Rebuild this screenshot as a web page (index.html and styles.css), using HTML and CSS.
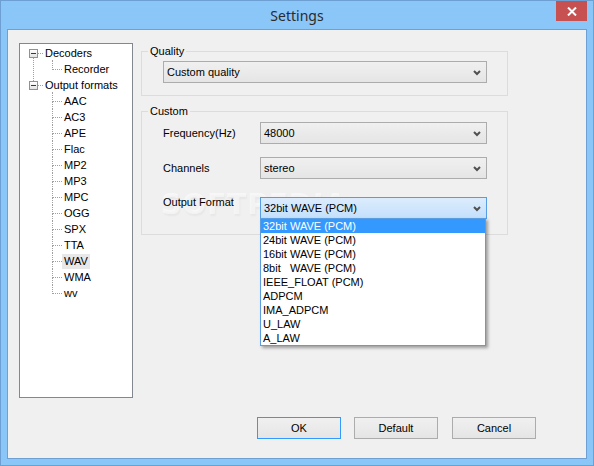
FILE: index.html
```html
<!DOCTYPE html>
<html lang="en">
<head>
    <meta charset="UTF-8">
    <meta name="viewport" content="width=device-width, initial-scale=1.0">
    <title>Settings</title>
    <link rel="stylesheet" href="styles.css">
</head>
<body>
    <div class="window">
        <div class="titlebar">
            <span class="title">Settings</span>
            <div class="close-btn">
                <svg width="10" height="9" viewBox="0 0 10 9">
                    <path d="M1 0.5 L9 8.5 M9 0.5 L1 8.5" stroke="#fff" stroke-width="2" fill="none"/>
                </svg>
            </div>
        </div>

        <div class="client">
            <div class="main">
                <ul class="tree">
                    <li class="node">
                        <div class="row"><span class="toggle"></span><span class="label">Decoders</span></div>
                        <ul class="sub">
                            <li><span class="label">Recorder</span></li>
                        </ul>
                    </li>
                    <li class="node">
                        <div class="row"><span class="toggle"></span><span class="label">Output formats</span></div>
                        <ul class="sub">
                            <li><span class="label">AAC</span></li>
                            <li><span class="label">AC3</span></li>
                            <li><span class="label">APE</span></li>
                            <li><span class="label">Flac</span></li>
                            <li><span class="label">MP2</span></li>
                            <li><span class="label">MP3</span></li>
                            <li><span class="label">MPC</span></li>
                            <li><span class="label">OGG</span></li>
                            <li><span class="label">SPX</span></li>
                            <li><span class="label">TTA</span></li>
                            <li><span class="label selected">WAV</span></li>
                            <li><span class="label">WMA</span></li>
                            <li><span class="label">wv</span></li>
                        </ul>
                    </li>
                </ul>

                <div class="panel">
                    <div class="group quality">
                        <span class="group-title">Quality</span>
                        <div class="combo wide">
                            <span>Custom quality</span>
                            <svg class="arrow" width="8" height="6" viewBox="0 0 8 6"><path d="M1 1 L4 4 L7 1" stroke="#505050" stroke-width="2" fill="none"/></svg>
                        </div>
                    </div>

                    <div class="group custom">
                        <span class="group-title">Custom</span>
                        <span class="watermark">SOFTPEDIA<sup>&reg;</sup></span>
                        <div class="field">
                            <span class="field-label">Frequency(Hz)</span>
                            <div class="combo">
                                <span>48000</span>
                                <svg class="arrow" width="8" height="6" viewBox="0 0 8 6"><path d="M1 1 L4 4 L7 1" stroke="#505050" stroke-width="2" fill="none"/></svg>
                            </div>
                        </div>
                        <div class="field">
                            <span class="field-label">Channels</span>
                            <div class="combo">
                                <span>stereo</span>
                                <svg class="arrow" width="8" height="6" viewBox="0 0 8 6"><path d="M1 1 L4 4 L7 1" stroke="#505050" stroke-width="2" fill="none"/></svg>
                            </div>
                        </div>
                        <div class="field format">
                            <span class="field-label">Output Format</span>
                            <div class="combo open">
                                <span>32bit WAVE (PCM)</span>
                                <svg class="arrow" width="8" height="6" viewBox="0 0 8 6"><path d="M1 1 L4 4 L7 1" stroke="#505050" stroke-width="2" fill="none"/></svg>
                                <ul class="dropdown">
                                    <li class="active">32bit WAVE (PCM)</li>
                                    <li>24bit WAVE (PCM)</li>
                                    <li>16bit WAVE (PCM)</li>
                                    <li>8bit&nbsp;&nbsp;&nbsp;WAVE (PCM)</li>
                                    <li>IEEE_FLOAT (PCM)</li>
                                    <li>ADPCM</li>
                                    <li>IMA_ADPCM</li>
                                    <li>U_LAW</li>
                                    <li>A_LAW</li>
                                </ul>
                            </div>
                        </div>
                    </div>
                </div>
            </div>

            <div class="footer">
                <button class="btn default-btn">OK</button>
                <button class="btn reset-btn">Default</button>
                <button class="btn">Cancel</button>
            </div>
        </div>
    </div>
</body>
</html>
```

FILE: styles.css
```css
* {
    box-sizing: border-box;
}

body {
    margin: 0;
    font-family: "Liberation Sans", Arial, sans-serif;
    font-size: 11px;
    color: #000;
    background: #fff;
}

ul {
    list-style: none;
    margin: 0;
    padding: 0;
}

.window {
    position: relative;
    width: 594px;
    height: 466px;
    background-color: #8bc6f9;
    border: 1px solid #6d9fd2;
}

.titlebar {
    height: 28px;
    display: flex;
    align-items: center;
    justify-content: center;
}

.title {
    font-family: "Noto Sans", "Open Sans", sans-serif;
    font-size: 14px;
    color: #2b2b2b;
    margin-top: 1px;
}

.close-btn {
    position: absolute;
    top: 0;
    right: 6px;
    width: 31px;
    height: 20px;
    background-color: #c75050;
    display: flex;
    align-items: center;
    justify-content: center;
}

.client {
    margin: 0 6px;
    height: 430px;
    background-color: #f0f0f0;
    border: 1px solid #6fa0d3;
    padding: 13px 0 0 11px;
    display: flex;
    flex-direction: column;
}

.main {
    display: flex;
    gap: 8px;
    height: 355px;
}

/* tree */
.tree {
    width: 114px;
    height: 355px;
    background-color: #fff;
    border: 1px solid #828790;
    padding-top: 1px;
}

.node {
    position: relative;
}

.node:first-child::after {
    content: "";
    position: absolute;
    left: 13px;
    top: 13px;
    bottom: -4px;
    border-left: 1px dotted #a0a0a0;
}

.row {
    height: 16px;
    display: flex;
    align-items: center;
    padding-left: 9px;
}

.toggle {
    position: relative;
    width: 9px;
    height: 9px;
    border: 1px solid #919191;
    background: linear-gradient(#ffffff, #e3e3e3);
    margin-right: 7px;
}

.toggle::before {
    content: "";
    position: absolute;
    left: 1px;
    top: 3px;
    width: 5px;
    height: 1px;
    background-color: #1e3a6e;
}

.toggle::after {
    content: "";
    position: absolute;
    left: 8px;
    top: 3px;
    width: 5px;
    border-top: 1px dotted #a0a0a0;
}

.label {
    line-height: 15px;
    padding: 0 2px;
    margin-left: -2px;
}

.label.selected {
    background-color: #e8e8e8;
}

.sub {
    margin-left: 32px;
}

.sub li {
    position: relative;
    height: 16px;
    padding-left: 12px;
    display: flex;
    align-items: center;
}

.sub li::before {
    content: "";
    position: absolute;
    left: 0;
    top: -1px;
    width: 9px;
    height: 9px;
    border-left: 1px dotted #a0a0a0;
    border-bottom: 1px dotted #a0a0a0;
}

.sub li::after {
    content: "";
    position: absolute;
    left: 0;
    top: 8px;
    bottom: 0;
    border-left: 1px dotted #a0a0a0;
}

.sub li:last-child::after {
    display: none;
}

/* right panel */
.panel {
    width: 367px;
    padding-top: 8px;
}

.group {
    position: relative;
    border: 1px solid #dcdcdc;
}

.group-title {
    position: absolute;
    top: -8px;
    left: 6px;
    padding: 0 2px;
    line-height: 14px;
    background-color: #f0f0f0;
}

.quality {
    height: 45px;
    padding: 9px 0 0 21px;
}

.custom {
    margin-top: 15px;
    height: 124px;
    padding: 10px 0 0 21px;
}

.field {
    position: relative;
    display: flex;
    align-items: center;
    margin-bottom: 13px;
}

.field.format {
    align-items: flex-start;
    padding-top: 5px;
}

.field-label {
    width: 97px;
}

.format .field-label {
    margin-top: -1px;
}

.combo {
    position: relative;
    width: 227px;
    height: 22px;
    border: 1px solid #acacac;
    background: linear-gradient(#f0f0f0, #e5e5e5);
    display: flex;
    align-items: center;
    justify-content: space-between;
    padding: 0 5px 0 3px;
}

.combo.wide {
    width: 324px;
}

.combo.open {
    border-color: #569de5;
    background: linear-gradient(#dcecfc, #c4e0fc);
}

.arrow {
    margin-top: 1px;
}

.dropdown {
    position: absolute;
    left: -1px;
    top: 20px;
    width: 226px;
    border: 1px solid #5a9de0;
    background-color: #fff;
    box-shadow: 2px 2px 3px rgba(0, 0, 0, 0.35);
    padding: 0;
    z-index: 2;
}

.dropdown li {
    height: 14px;
    line-height: 14px;
    padding-left: 2px;
    white-space: pre;
}

.dropdown li.active {
    background-color: #3399ff;
    color: #fff;
}

.watermark {
    position: absolute;
    left: 19px;
    top: 76px;
    font-family: "DejaVu Sans", sans-serif;
    font-size: 28px;
    font-weight: bold;
    letter-spacing: 1px;
    color: rgba(255, 255, 255, 0.55);
    text-shadow: 1px 2px 2px rgba(0, 0, 0, 0.04);
    pointer-events: none;
}

.watermark sup {
    font-size: 9px;
}

/* buttons */
.footer {
    display: flex;
    justify-content: flex-end;
    gap: 13px;
    margin-top: 19px;
    padding-right: 50px;
}

.btn {
    width: 84px;
    height: 22px;
    border: 1px solid #acacac;
    background: linear-gradient(#f0f0f0, #e5e5e5);
    font-family: "Liberation Sans", Arial, sans-serif;
    font-size: 11px;
    color: #000;
    padding: 0;
}

.btn.default-btn {
    border-color: #3399ff;
}

.btn.reset-btn {
    margin-right: 1px;
}
```
